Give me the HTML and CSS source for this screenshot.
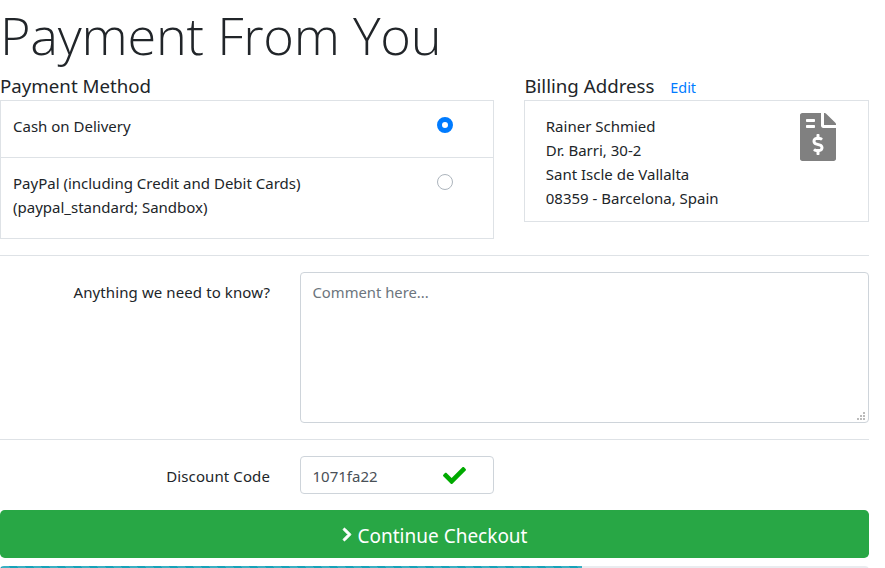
FILE: index.html
```html
<!DOCTYPE html>
<html lang="en">
<head>
<meta charset="utf-8">
<title>Payment From You</title>
<link rel="stylesheet" href="styles.css">
</head>
<body>
<main class="page">
  <h1 class="title">Payment From You</h1>
  <div class="columns">
    <section class="col-method">
      <h5 class="section-title">Payment Method</h5>
      <div class="method-list">
        <div class="method method-first">
          <span class="method-text">Cash on Delivery</span>
          <span class="radio radio-on"></span>
        </div>
        <div class="method method-second">
          <span class="method-text">PayPal (including Credit and Debit Cards)<br>(paypal_standard; Sandbox)</span>
          <span class="radio"></span>
        </div>
      </div>
    </section>
    <section class="col-billing">
      <h5 class="section-title">Billing Address <a class="edit" href="#">Edit</a></h5>
      <div class="billing-box">
        <address class="billing-text">Rainer Schmied<br>Dr. Barri, 30-2<br>Sant Iscle de Vallalta<br>08359 - Barcelona, Spain</address>
        <svg class="invoice-icon" viewBox="0 0 384 512" aria-hidden="true"><path d="M377 105L279.1 7c-4.5-4.5-10.6-7-17-7H256v128h128v-6.1c0-6.3-2.5-12.4-7-16.9zm-153 31V0H24C10.7 0 0 10.7 0 24v464c0 13.3 10.7 24 24 24h336c13.3 0 24-10.7 24-24V160H248c-13.2 0-24-10.8-24-24zM64 72c0-4.42 3.58-8 8-8h80c4.42 0 8 3.58 8 8v16c0 4.42-3.58 8-8 8H72c-4.42 0-8-3.58-8-8V72zm0 80v-16c0-4.42 3.58-8 8-8h80c4.42 0 8 3.58 8 8v16c0 4.42-3.58 8-8 8H72c-4.42 0-8-3.58-8-8zm144 263.88V440c0 4.42-3.58 8-8 8h-16c-4.42 0-8-3.58-8-8v-24.29c-11.29-.58-22.27-4.52-31.37-11.35-3.9-2.93-4.1-8.77-.57-12.14l11.75-11.21c2.77-2.64 6.89-2.76 10.13-.73 3.87 2.42 8.26 3.72 12.82 3.72h28.11c6.5 0 11.8-5.92 11.8-13.19 0-5.95-3.61-11.19-8.77-12.73l-45-13.5c-18.59-5.58-31.58-23.42-31.58-43.39 0-24.52 19.05-44.44 42.67-45.07V232c0-4.42 3.58-8 8-8h16c4.42 0 8 3.58 8 8v24.29c11.29.58 22.27 4.51 31.37 11.35 3.9 2.93 4.1 8.77.57 12.14l-11.75 11.21c-2.77 2.64-6.89 2.76-10.13.73-3.87-2.43-8.26-3.72-12.82-3.72h-28.11c-6.5 0-11.8 5.92-11.8 13.19 0 5.95 3.61 11.19 8.77 12.73l45 13.5c18.59 5.58 31.58 23.42 31.58 43.39 0 24.53-19.05 44.44-42.67 45.07z"/></svg>
      </div>
    </section>
  </div>
  <hr class="rule rule-first">
  <div class="form-row">
    <label class="form-label" for="comment">Anything we need to know?</label>
    <div class="comment-wrap">
      <textarea class="comment" id="comment" placeholder="Comment here..."></textarea>
      <svg class="grip" viewBox="0 0 9 9" aria-hidden="true"><rect x="6" y="0" width="2" height="2"/><rect x="3" y="3" width="2" height="2"/><rect x="6" y="3" width="2" height="2"/><rect x="0" y="6" width="2" height="2"/><rect x="3" y="6" width="2" height="2"/><rect x="6" y="6" width="2" height="2"/></svg>
    </div>
  </div>
  <hr class="rule rule-second">
  <div class="form-row">
    <label class="form-label" for="code">Discount Code</label>
    <div class="code-wrap">
      <input class="code" id="code" type="text" value="1071fa22">
      <svg class="check-icon" viewBox="0 0 512 512" aria-hidden="true"><path d="M173.898 439.404l-166.4-166.4c-9.997-9.997-9.997-26.206 0-36.204l36.203-36.204c9.997-9.998 26.207-9.998 36.204 0L192 312.69 432.095 72.596c9.997-9.997 26.207-9.997 36.204 0l36.203 36.204c9.997 9.997 9.997 26.206 0 36.204l-294.4 294.401c-9.998 9.997-26.207 9.997-36.204-.001z"/></svg>
    </div>
  </div>
  <button class="continue" type="button">
    <svg class="chevron-icon" viewBox="0 0 320 512" aria-hidden="true"><path d="M285.476 272.971L91.132 467.314c-9.373 9.373-24.569 9.373-33.941 0l-22.667-22.667c-9.357-9.357-9.375-24.522-.04-33.901L188.505 256 34.484 101.255c-9.335-9.379-9.317-24.544.04-33.901l22.667-22.667c9.373-9.373 24.569-9.373 33.941 0L285.475 239.03c9.373 9.372 9.373 24.568.001 33.941z"/></svg>
    <span class="continue-text">Continue Checkout</span>
  </button>
  <div class="progress"><div class="progress-bar"></div></div>
</main>
</body>
</html>
```
FILE: styles.css
```css
html, body {
  margin: 0;
  padding: 0;
  height: 568px;
  overflow: hidden;
  background: #fff;
}
body {
  font-family: "Noto Sans", "Open Sans", sans-serif;
  font-size: 15px;
  line-height: 24px;
  color: #212529;
}
.page {
  width: 869px;
}
.title {
  margin: 0;
  height: 74px;
  font-family: "Open Sans", sans-serif;
  font-weight: 300;
  font-size: 52.3px;
  line-height: 70px;
  letter-spacing: -0.25px;
}
.columns {
  display: flex;
  gap: 30px;
}
.col-method {
  width: 494.4px;
}
.col-billing {
  flex: 1;
}
.section-title {
  height: 24px;
  margin: 0 0 2px;
  font-weight: 400;
  font-size: 18.7px;
  line-height: 24px;
}
.edit {
  margin-left: 11px;
  font-size: 14.4px;
  line-height: 1;
  color: #007bff;
  text-decoration: none;
}
.method-list {
  border: 1px solid #dee2e6;
}
.method {
  display: flex;
  justify-content: space-between;
  align-items: flex-start;
  padding: 13px 40px 0 12px;
}
.method-first {
  height: 43px;
  border-bottom: 1px solid #dee2e6;
}
.method-second {
  height: 67px;
}
.radio {
  box-sizing: border-box;
  width: 16px;
  height: 16px;
  margin-top: 3px;
  border: 1px solid #adb5bd;
  border-radius: 50%;
  background: #fff;
}
.radio-on {
  border: 5px solid #007bff;
}
.billing-box {
  display: flex;
  justify-content: space-between;
  align-items: flex-start;
  height: 120px;
  border: 1px solid #dee2e6;
  padding: 0 32px 0 20.4px;
}
.billing-text {
  padding-top: 13px;
  font-style: normal;
}
.invoice-icon {
  width: 36px;
  height: 48px;
  margin-top: 12px;
  fill: #808080;
}
.rule {
  margin: 0;
  border: 0;
  border-top: 1px solid #dee2e6;
}
.rule-first {
  margin-top: 16px;
  margin-bottom: 16px;
}
.rule-second {
  margin-top: 16px;
  margin-bottom: 16px;
}
.form-row {
  display: flex;
  gap: 30px;
}
.form-label {
  width: 270px;
  flex: none;
  padding-top: 8px;
  text-align: right;
  letter-spacing: 0.1px;
}
.comment-wrap {
  position: relative;
  flex: 1;
  height: 151px;
}
.comment {
  box-sizing: border-box;
  display: block;
  width: 100%;
  height: 100%;
  margin: 0;
  padding: 7px 12px 7px 11.5px;
  border: 1px solid #ced4da;
  border-radius: 4px;
  font: inherit;
  font-size: 14.8px;
  color: #495057;
  resize: none;
}
.comment::placeholder {
  color: #6c757d;
  opacity: 1;
}
.grip {
  position: absolute;
  right: 3px;
  bottom: 2px;
  width: 9px;
  height: 9px;
  fill: #bbb;
}
.code-wrap {
  position: relative;
  width: 194px;
}
.code {
  box-sizing: border-box;
  display: block;
  width: 100%;
  height: 38px;
  margin: 0;
  padding: 8px 12px 6px 11.5px;
  border: 1px solid #ced4da;
  border-radius: 4px;
  font: inherit;
  color: #495057;
}
.check-icon {
  position: absolute;
  left: 143px;
  top: 8px;
  width: 23px;
  height: 23px;
  fill: #00aa00;
}
.continue {
  display: flex;
  align-items: center;
  justify-content: center;
  gap: 6px;
  box-sizing: border-box;
  width: 100%;
  height: 48px;
  margin: 16px 0 8px;
  padding: 3px 0 0;
  border: 0;
  border-radius: 4.8px;
  background: #28a745;
  color: #fff;
  font: inherit;
  font-size: 19px;
}
.chevron-icon {
  width: 10px;
  height: 15px;
  margin-top: -3px;
  fill: #fff;
  stroke: #fff;
  stroke-width: 30;
}
.progress {
  height: 16px;
  background: #e9ecef;
  border-radius: 4px;
  overflow: hidden;
}
.progress-bar {
  width: 582px;
  height: 100%;
  background-color: #17a2b8;
  background-image: linear-gradient(45deg, rgba(255,255,255,.15) 25%, transparent 25%, transparent 50%, rgba(255,255,255,.15) 50%, rgba(255,255,255,.15) 75%, transparent 75%, transparent);
  background-size: 16px 16px;
}
```
